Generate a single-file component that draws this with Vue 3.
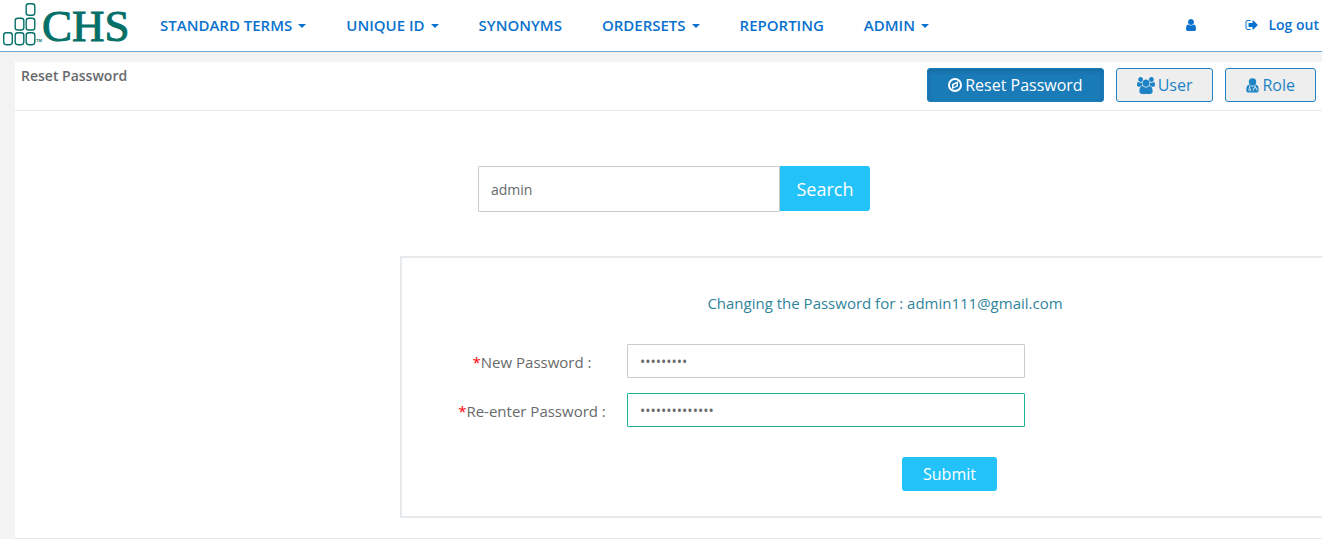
<script setup>
import { ref } from 'vue'

const menu = [
  { label: 'STANDARD TERMS', dropdown: true },
  { label: 'UNIQUE ID', dropdown: true },
  { label: 'SYNONYMS', dropdown: false },
  { label: 'ORDERSETS', dropdown: true },
  { label: 'REPORTING', dropdown: false },
  { label: 'ADMIN', dropdown: true },
]

const query = ref('admin')
const password = ref('password1')
const confirmation = ref('password123456')
</script>

<template>
  <div class="page">
    <header class="topbar">
      <a class="brand" href="#" aria-label="CHS home">
        <svg width="140" height="51" viewBox="0 0 140 51">
          <g fill="#fff" stroke="#047068" stroke-width="1.4">
            <rect x="26.2" y="3.7" width="8.6" height="11.6" rx="2.6" />
            <rect x="15.2" y="18.2" width="8.6" height="11.8" rx="2.6" />
            <rect x="26.2" y="18.2" width="8.6" height="11.8" rx="2.6" />
            <rect x="3.7" y="32.7" width="8.6" height="12" rx="2.6" />
            <rect x="15.2" y="32.7" width="8.6" height="12" rx="2.6" />
            <rect x="26.2" y="32.7" width="8.6" height="12" rx="2.6" />
          </g>
          <text class="mark" x="36" y="42">TM</text>
          <text class="word" x="42" y="41">CHS</text>
        </svg>
      </a>
      <nav class="menu">
        <a v-for="item in menu" :key="item.label" href="#">
          {{ item.label }}<span v-if="item.dropdown" class="caret"></span>
        </a>
      </nav>
      <div class="account">
        <a href="#" aria-label="Account">
          <svg width="14" height="14" viewBox="0 0 1792 1792" fill="currentColor">
            <path d="M1536 1399q0 109-62.5 187t-150.5 78h-854q-88 0-150.5-78t-62.5-187q0-85 8.5-160.5t31.5-152 58.5-131 94-89 134.5-34.5q131 128 313 128t313-128q76 0 134.5 34.5t94 89 58.5 131 31.5 152 8.5 160.5zm-256-887q0 159-112.5 271.5t-271.5 112.5-271.5-112.5-112.5-271.5 112.5-271.5 271.5-112.5 271.5 112.5 112.5 271.5z" />
          </svg>
        </a>
        <a href="#" class="logout">
          <svg width="14" height="14" viewBox="0 0 1792 1792" fill="currentColor">
            <path d="M704 1440q0 4 1 20t.5 26.5-3 23.5-10 19.5-20.5 6.5h-320q-119 0-203.5-84.5t-84.5-203.5v-704q0-119 84.5-203.5t203.5-84.5h320q13 0 22.5 9.5t9.5 22.5q0 4 1 20t.5 26.5-3 23.5-10 19.5-20.5 6.5h-320q-66 0-113 47t-47 113v704q0 66 47 113t113 47h312l11.5 1 11.5 3 8 5.5 7 9 2 13.5zm928-544q0 26-19 45l-544 544q-19 19-45 19t-45-19-19-45v-288h-448q-26 0-45-19t-19-45v-384q0-26 19-45t45-19h448v-288q0-26 19-45t45-19 45 19l544 544q19 19 19 45z" />
          </svg>
          Log out
        </a>
      </div>
    </header>

    <main class="panel">
      <div class="panel-head">
        <h1>Reset Password</h1>
        <div class="tabs">
          <button type="button" class="tab active">
            <svg width="14" height="16" viewBox="0 0 14 16">
              <circle cx="7" cy="8" r="6" fill="none" stroke="currentColor" stroke-width="2" />
              <path d="M10 4.200v5L4 12V7zM8.600 6.600L5.600 8v2.200L8.600 8.600z" fill="currentColor" fill-rule="evenodd" />
            </svg>
            Reset Password
          </button>
          <button type="button" class="tab">
            <svg width="18" height="17" viewBox="-64 0 1920 1792" fill="currentColor">
              <path d="M529 896q-162 5-265 128h-134q-82 0-138-40.5t-56-118.5q0-353 124-353 6 0 43.5 21t97.5 42.5 119 21.5q67 0 133-23-5 37-5 66 0 139 81 256zm1071 637q0 120-73 189.5t-194 69.5h-874q-121 0-194-69.5t-73-189.5q0-53 3.5-103.5t14-109 26.5-108.5 43-97.5 62-81 85.5-53.5 111.5-20q10 0 43 21.5t73 48 107 48 135 21.5 135-21.5 107-48 73-48 43-21.5q61 0 111.5 20t85.5 53.5 62 81 43 97.5 26.5 108.5 14 109 3.5 103.5zm-1024-1277q0 106-75 181t-181 75-181-75-75-181 75-181 181-75 181 75 75 181zm704 384q0 159-112.5 271.5t-271.5 112.5-271.5-112.5-112.5-271.5 112.5-271.5 271.5-112.5 271.5 112.5 112.5 271.5zm576 225q0 78-56 118.5t-138 40.5h-134q-103-123-265-128 81-117 81-256 0-29-5-66 66 23 133 23 59 0 119-21.5t97.5-42.5 43.5-21q124 0 124 353zm-128-609q0 106-75 181t-181 75-181-75-75-181 75-181 181-75 181 75 75 181z" />
            </svg>
            User
          </button>
          <button type="button" class="tab">
            <svg width="13" height="15" viewBox="0 0 13 15">
              <circle cx="6.5" cy="4" r="3.7" fill="currentColor" />
              <path d="M3.2 6.6C1 7.200 .3 9.200 .3 11.900c0 1.800 1 2.600 2.400 2.600h7.600c1.400 0 2.400-.8 2.400-2.600 0-2.700-.7-4.700-2.900-5.300L6.500 9z" fill="currentColor" />
              <path d="M3.700 7.500v3.200M9.200 7.500v2.200M7.400 12.600v-1.100a1.800 1.800 0 0 1 3.600 0v1.100" fill="none" stroke="#eee" stroke-width="1" />
              <circle cx="3.700" cy="11.700" r="1.100" fill="currentColor" stroke="#eee" stroke-width=".9" />
            </svg>
            Role
          </button>
        </div>
      </div>

      <div class="panel-body">
        <form class="search" @submit.prevent>
          <input v-model="query" type="text" aria-label="User name" />
          <button type="submit">Search</button>
        </form>

        <form class="card" @submit.prevent>
          <p class="notice">Changing the Password for : admin111@gmail.com</p>
          <div class="row">
            <label for="new-password"><span class="required">*</span>New Password :</label>
            <input id="new-password" v-model="password" type="password" />
          </div>
          <div class="row">
            <label for="repeat-password"><span class="required">*</span>Re-enter Password :</label>
            <input id="repeat-password" v-model="confirmation" class="current" type="password" />
          </div>
          <button class="submit" type="submit">Submit</button>
        </form>
      </div>
    </main>
  </div>
</template>

<style>
body {
  margin: 0;
  background: #f3f3f4;
}
</style>

<style scoped>
.page {
  min-height: 100vh;
  overflow: hidden;
  color: #676a6c;
  font-family: "Open Sans", "Noto Sans", sans-serif;
  font-size: 14px;
}
.page * {
  box-sizing: border-box;
}
a {
  color: #0a72ce;
  text-decoration: none;
}
button,
input {
  font-family: inherit;
}
.topbar {
  display: flex;
  align-items: center;
  height: 52px;
  padding-bottom: 2px;
  background: #fff;
  border-bottom: 1px solid #6fa8d4;
}
.brand {
  flex: none;
  align-self: flex-start;
  width: 160px;
}
.brand svg {
  display: block;
}
.mark {
  fill: #047068;
  font: 700 4px "Liberation Sans", sans-serif;
}
.word {
  fill: #047068;
  stroke: #047068;
  stroke-width: 1px;
  font: 45px "Liberation Serif", serif;
}
.menu {
  display: flex;
  gap: 40px;
  font-size: 15px;
  font-weight: 600;
  white-space: nowrap;
}
.caret {
  display: inline-block;
  margin-left: 6px;
  vertical-align: middle;
  border-top: 4px solid;
  border-right: 4px solid transparent;
  border-left: 4px solid transparent;
}
.account {
  display: flex;
  align-items: center;
  gap: 47px;
  margin-left: auto;
  padding-right: 3px;
  font-weight: 600;
  white-space: nowrap;
}
.account a {
  display: flex;
  align-items: center;
  gap: 9px;
}
.panel {
  margin: 10px 0 0 15px;
  background: #fff;
  border-bottom: 1px solid #e7eaec;
}
.panel-head {
  display: flex;
  justify-content: space-between;
  padding: 6px;
  min-height: 49px;
  border-bottom: 1px solid #e7eaec;
}
h1 {
  margin: 0;
  font-size: 14px;
  font-weight: 600;
  line-height: 16px;
}
.tabs {
  display: flex;
  gap: 12px;
}
.tab {
  display: flex;
  align-items: center;
  gap: 3px;
  height: 34px;
  padding: 0 20px;
  border: 1px solid #1c84c6;
  border-radius: 3px;
  background: #eee;
  color: #1c84c6;
  font-size: 16px;
}
.tab.active {
  background: #1a7bb9;
  border-color: #1a7bb9;
  box-shadow: inset 0 3px 5px rgba(0, 0, 0, 0.125);
  color: #fff;
}
.panel-body {
  padding: 55px 0 20px;
}
.search {
  display: flex;
  width: 392px;
  margin-left: 463px;
}
input {
  min-width: 0;
  padding: 0 12px;
  border: 1px solid #ccc;
  border-radius: 1px;
  background: #fff;
  color: #676a6c;
  font-size: 14px;
  outline: none;
}
.search input {
  flex: 1;
  height: 46px;
}
.search button,
.submit {
  border: 0;
  border-radius: 3px;
  background: #23c2f9;
  color: #fff;
}
.search button {
  width: 90px;
  height: 45px;
  padding: 0;
  border-radius: 0 3px 3px 0;
  font-size: 18px;
}
.card {
  margin: 44px -48px 0 385px;
  padding: 34px 0 25px;
  border: 2px solid #e7eaec;
}
.notice {
  margin: 0 0 30px;
  color: #31849b;
  font-size: 15px;
  line-height: 22px;
  text-align: center;
}
.row {
  display: flex;
  align-items: center;
  margin-bottom: 15px;
}
.row label {
  width: 190px;
  margin-left: 35px;
  padding-top: 2px;
  font-size: 15px;
  text-align: center;
}
.required {
  color: red;
}
.row input {
  width: 398px;
  height: 34px;
}
.row input.current {
  border-color: #1ab394;
}
.submit {
  display: block;
  width: 95px;
  height: 34px;
  margin: 30px 0 0 500px;
  padding: 0;
  font-size: 16px;
}
</style>
